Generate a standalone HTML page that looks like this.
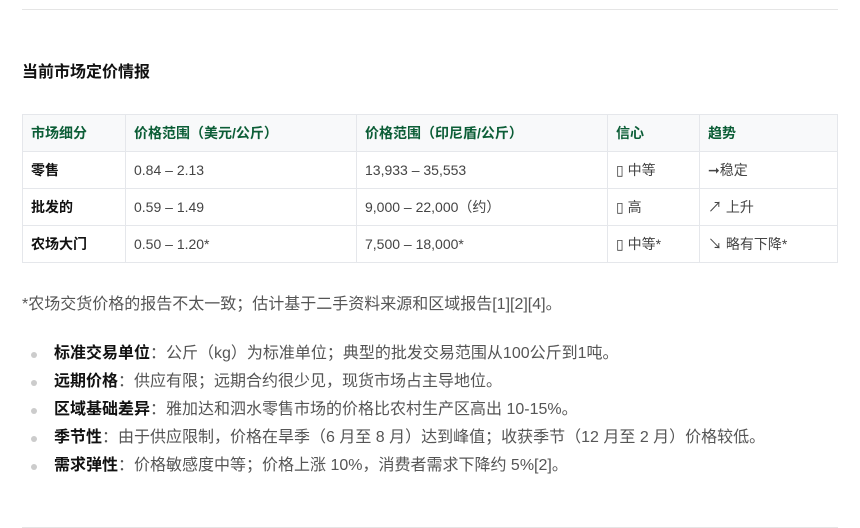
<!DOCTYPE html>
<html><head><meta charset="utf-8"><style>
*{margin:0;padding:0;box-sizing:border-box}
body{width:860px;height:528px;background:#fff;font-family:"Liberation Sans","Noto Sans CJK SC",sans-serif;color:#333;position:relative;overflow:hidden}
.hr{position:absolute;left:22px;width:816px;height:1px;background:#e5e5e5}
h3{position:absolute;left:22px;top:62px;font-size:16px;font-weight:bold;color:#111;line-height:22px}
table{position:absolute;left:22px;top:114px;width:816px;border-collapse:collapse;font-size:14px}
td,th{border:1px solid #e5e7eb;height:37px;padding:0 8px;text-align:left;vertical-align:middle}
th{background:#f8f9fa;color:#0b5d36;font-weight:bold}
td{color:#444}
td:first-child{font-weight:bold;color:#111}
.note{position:absolute;left:22px;top:293px;font-size:16px;color:#555;line-height:24px}
ul{position:absolute;left:22px;top:340px;list-style:none;font-size:16px;color:#555}
li{height:28px;line-height:28px;padding-left:32px;position:relative;white-space:nowrap}
li:before{content:"";position:absolute;left:9px;top:12px;width:6px;height:6px;border-radius:50%;background:#ccc}
li b{color:#111}
</style></head><body>
<div class="hr" style="top:9px"></div>
<h3>当前市场定价情报</h3>
<table>
<tr><th style="width:103px">市场细分</th><th style="width:231px">价格范围（美元/公斤）</th><th style="width:251px">价格范围（印尼盾/公斤）</th><th style="width:92px">信心</th><th>趋势</th></tr>
<tr><td>零售</td><td>0.84 – 2.13</td><td>13,933 – 35,553</td><td>▯ 中等</td><td>➞稳定</td></tr>
<tr><td>批发的</td><td>0.59 – 1.49</td><td>9,000 – 22,000（约）</td><td>▯ 高</td><td>↗ 上升</td></tr>
<tr><td>农场大门</td><td>0.50 – 1.20*</td><td>7,500 – 18,000*</td><td>▯ 中等*</td><td>↘ 略有下降*</td></tr>
</table>
<div class="note">*农场交货价格的报告不太一致；估计基于二手资料来源和区域报告[1][2][4]。</div>
<ul>
<li><b>标准交易单位</b>：公斤（kg）为标准单位；典型的批发交易范围从100公斤到1吨。</li>
<li><b>远期价格</b>：供应有限；远期合约很少见，现货市场占主导地位。</li>
<li><b>区域基础差异</b>：雅加达和泗水零售市场的价格比农村生产区高出 10-15%。</li>
<li><b>季节性</b>：由于供应限制，价格在旱季（6 月至 8 月）达到峰值；收获季节（12 月至 2 月）价格较低。</li>
<li><b>需求弹性</b>：价格敏感度中等；价格上涨 10%，消费者需求下降约 5%[2]。</li>
</ul>
<div class="hr" style="top:527px"></div>
</body></html>
